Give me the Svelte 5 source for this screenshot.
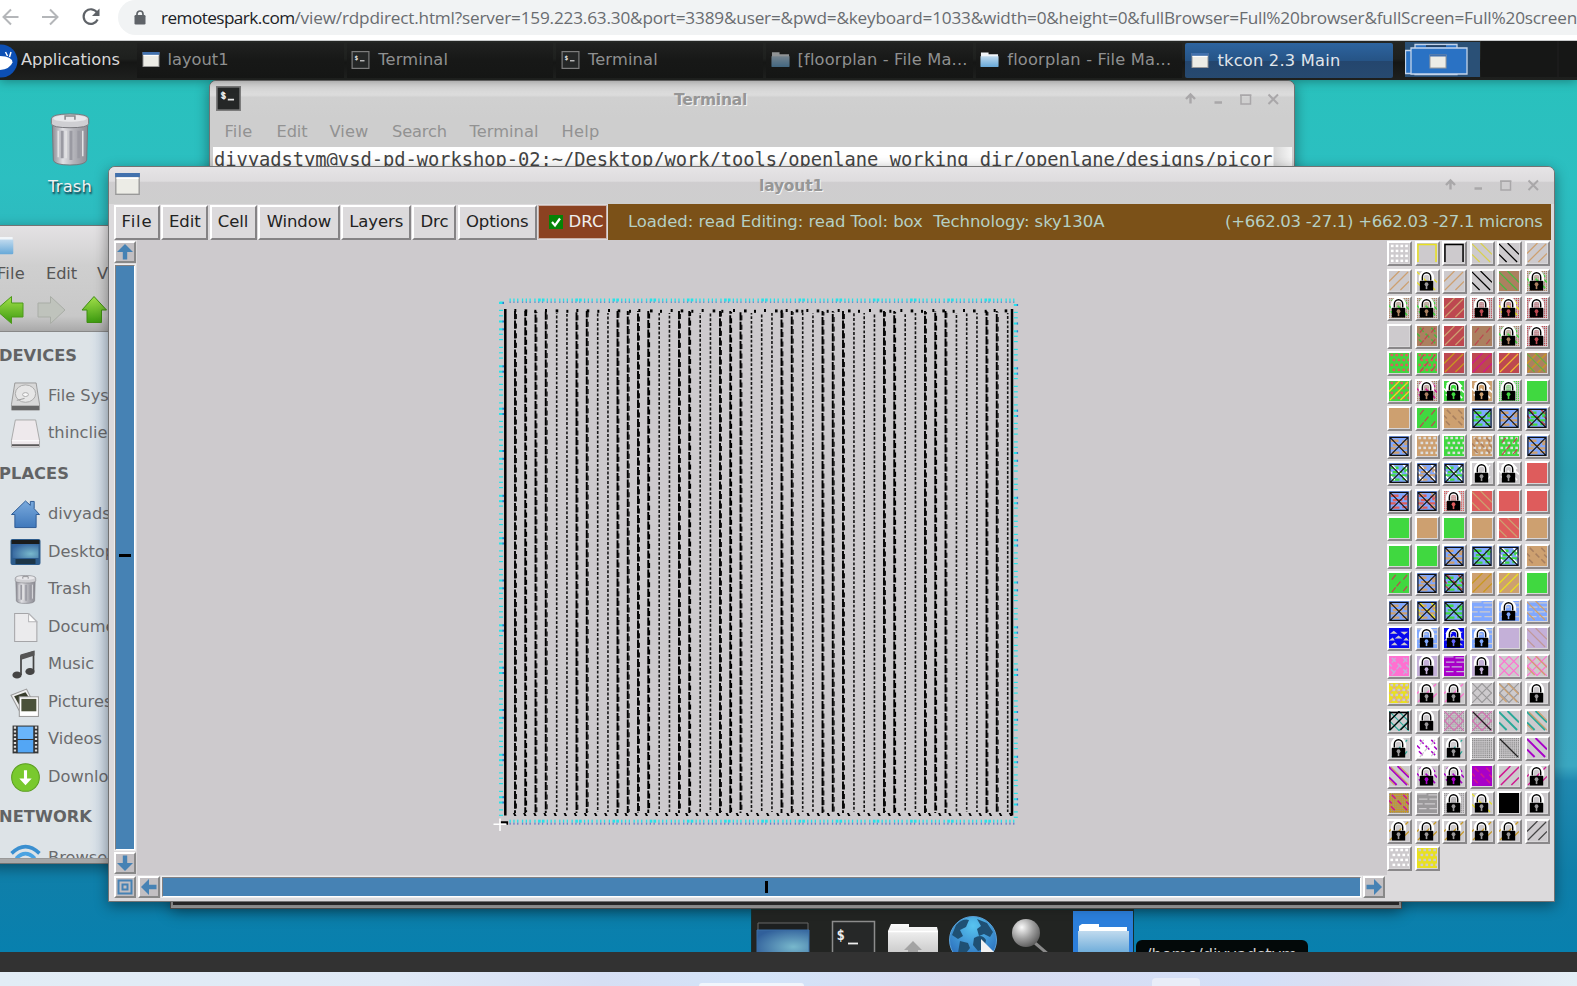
<script>
  // Spreads the letters of a label so that it fills the given width.
  function fit(node, width) {
    const w = node.getBoundingClientRect().width;
    const n = node.textContent.length;
    node.style.letterSpacing = (width - w) / n + 'px';
  }

  const tasks = [
    { icon: 'win', label: 'layout1', w: 61 },
    { icon: 'term', label: 'Terminal', w: 70 },
    { icon: 'term', label: 'Terminal', w: 70 },
    { icon: 'dim', label: '[floorplan - File Ma...', w: 170 },
    { icon: 'folder', label: 'floorplan - File Ma...', w: 164 },
    { icon: 'win', label: 'tkcon 2.3 Main', w: 123, active: true }
  ];

  const termMenu = [['File', 28, 52], ['Edit', 31, 53], ['View', 39, 62.5], ['Search', 55, 77.5], ['Terminal', 69, 92], ['Help', 38, 60]];

  const tkMenu = [['File', 31, 46], ['Edit', 31.5, 47], ['Cell', 30.5, 47], ['Window', 64.5, 82], ['Layers', 54, 70], ['Drc', 28, 44], ['Options', 62.5, 79]];

  const places = [
    { head: 'DEVICES', w: 78, h: 43 },
    { icon: 'disk', label: 'File System' },
    { icon: 'drive', label: 'thinclient' },
    { head: 'PLACES', w: 70, h: 43.5 },
    { icon: 'home', label: 'divyadstym' },
    { icon: 'desk', label: 'Desktop' },
    { icon: 'trash', label: 'Trash' },
    { icon: 'doc', label: 'Documents' },
    { icon: 'music', label: 'Music' },
    { icon: 'pics', label: 'Pictures' },
    { icon: 'video', label: 'Videos' },
    { icon: 'down', label: 'Downloads' },
    { head: 'NETWORK', w: 93, h: 43.5 },
    { icon: 'net', label: 'Browse Network' }
  ];

  // Standard cell columns: T is a strap with a heavy outline, t a light one.
  const kinds = 'TTTTttTTttTTTTttTTttTTTtttTTttTTTtttTTttTTTtttTTt';
  const cols = [...kinds].map((k, i) => ({ k, x: 515.3 + i * 10.25 }));
  const topDots = [106, 137, 166, 198, 230, 262, 292, 323, 355, 387, 416, 450, 478, 513, 543, 575, 605, 637, 668, 701, 727, 762, 795, 825, 855, 888, 905, 920, 950, 967, 982, 1013, 1043, 1076, 1107, 1137, 1170, 1202, 1231, 1264, 1295, 1326, 1360, 1390, 1421, 1452, 1482, 1517, 1544, 1577].map((v) => 480 + v / 3);
  const botDots = topDots.map((x, i) => 514 + i * 10.12);

  const pinsH = [];
  for (let i = 0, x = 509.5; x < 1016; i++, x += i % 3 ? 3.8 : 4.8) pinsH.push({ x, b: i % 9 > 6 });
  const pinsV = [];
  for (let i = 0, y = 302; y < 815; i++, y += [5.3, 7.8, 5.4][i % 3]) pinsV.push({ y, b: i % 7 === 3 || i % 7 === 4 || i === 0 });

  const G = '#40d840', T = '#cda070', R = '#bd4850', C = '#de5c5c', B = '#ac8060', P = '#c4b0d8', K = '#000';
  const U = '#80a8ff', Y = '#e8e020', M = '#a800c8', N = '#ff70d0', W = '#fff', S = '#9a989a', O = '#c89820', E = '#28a898', A = '#d01890';
  // Each entry: background, then pattern/colour pairs.
  const tiles = [
    ['', 'g', W], ['', 'b', Y], ['', 'b', K], ['', 'd', '#d8d050'], ['', 'd', K], ['', 's', T],
    ['', 's', T], ['', 'd', Y, 'L', S], ['', 's', T], ['', 'd', K], [B, 'd', '#48b840'], ['', 'q', B, 'c', G, 'L', B],
    ['', 'q', B, 'c', G, 'L', B], ['', 'q', B, 'c', G, 'L', B], [R, 's', T], ['', 'q', R, 'L', R], ['', 'q', R, 'c', Y, 'L', R], ['', 'q', R, 'L', R],
    [''], [B, 'c', '#48b840', 'j', R], [R, 's', T], [B, 'j', R], ['', 'q', B, 'c', G, 'L', B], ['', 'q', R, 'L', R],
    [G, 'o', C], [G, 'o', C, 'j', R], [R, 's', O], [R, 's', A], [R, 's', '#f0b830'], [B, 's', O, 'd', '#68b040'],
    [G, 'o', C, 's', Y], ['', 'q', B, 'c', A, 'L', B], [G, 'c', W, 'L', G], [T, 'c', W, 'L', T], ['', 'q', G, 'L', G], [G],
    [T], [G, 'j', R], [T, 'c', '#a88060'], [U, 'w', G, 'X', K], [U, 'w', T, 'X', K], [U, 'w', G, 'c', R, 'X', K],
    [U, 'w', T, 'X', K], [T, 'o', '#ddd'], [G, 'o', '#ddd'], [T, 'o', '#ddd', 'c', B], [G, 'o', '#ddd', 'j', R], [U, 'w', T, 'X', K],
    [U, 'w', G, 'c', W, 'X', K], [U, 'w', T, 'c', W, 'X', K], [U, 'w', G, 'c', W, 'X', K], ['', 'j', W, 'L', S], ['', 'c', W, 'L', S], [C],
    [U, 'w', C, 'X', K], [U, 'w', C, 'c', T, 'X', K], ['', 'q', C, 'L', C], [C, 'd', T], [C], [C],
    [G], [T], [G], [T], [C, 'd', T], [T],
    [G], [G], [U, 'w', T, 'X', K], [U, 'w', G, 'X', K], [U, 'w', G, 'c', W, 'X', K], [T, 'c', '#a88060'],
    [G, 'j', R], [U, 'w', T, 'X', K], [U, 'w', G, 'c', R, 'X', K], [T, 's', O], [T, 's', Y], [G],
    [U, 'w', T, 'X', K], [U, 'w', T, 'c', Y, 'X', K], [U, 'w', G, 'X', K], [U, 'h', '#cdcacd'], [U, 'h', '#cdcacd', 'L', U], [U, 'h', '#cdcacd', 'd', T],
    ['#0808f0', 'v', '#cdcacd'], [U, 'h', '#cdcacd', 'L', U], ['#0808f0', 'v', '#cdcacd', 'L', '#66f'], [U, 'h', '#cdcacd', 'L', U], [P], [P, 'd', '#c09898'],
    [N, 'c', P, 'j', P], [P, 'L', P], [M, 'h', P], [P, 'L', P], ['', 'x', N], ['', 'x', N, 'd', T],
    [Y, 'x', '#e0a890', 'o', '#cdcacd'], ['', 's', N, 'L', S], ['', 's', N, 'L', S], ['', 'x', S], ['', 'x', S, 'd', T], ['', 'L', S],
    ['', 'x', E, 's', K, 'b', K], ['', 'L', S], ['', 'q', S, 'x', '#d070b0'], ['', 'q', S, 'x', '#d070b0', 'i', '#222'], ['', 'D', E], ['', 'D', E, 'e', T],
    ['', 'j', E, 'L', S], [W, 'c', M, 'j', '#cdcacd'], ['', 'j', E, 'L', S], ['', 'q', '#888'], ['', 'q', '#888', 'i', '#222'], ['', 'D', M],
    ['', 'D', M, 'e', T], ['', 'c', M, 'L', M], ['', 'c', M, 'L', M], [M, 'c', A], ['', 'D2', A], ['', 's', A, 'L', S],
    [O, 'q', S, 'c', A], [S, 'h', '#cdcacd'], ['', 'q', S, 'L', S], ['', 'd', Y, 'L', S], [K], ['', 'L', S],
    ['', 's', O, 'L', S], ['', 's', O, 'L', S], ['', 's', O, 'L', S], ['', 's', O, 'L', S], ['', 's', O, 'L', S], ['', 's', '#444'],
    ['', 'o', W], [Y, 'o', '#cdcacd']
  ];
  const paths = {
    d: 'M0 1L19 20M9 0L21 12M0 12L8 20',
    e: 'M2 1L21 20M11 0L21 10M0 14L6 20',
    D: 'M0 1L19 20M9 0L21 12M0 12L8 20',
    D2: 'M21 1L2 20M12 0L0 12M21 12L13 20',
    s: 'M20 1L1 20M11 0L0 11M21 11L12 20',
    x: 'M0 0L21 21M0 10L11 21M10 0L21 11M21 0L0 21M11 0L0 11M21 10L10 21',
    c: 'M3 2l4 4M15 2l4 4M9 8l4 4M2 14l4 4M15 14l4 4M0 8l3 3M18 9l3 3',
    j: 'M7 2l-4 5M19 2l-4 5M12 9l-4 5M7 15l-4 5M19 14l-4 5',
    w: 'M2 5h8m4 1h6M4 9.500h10m2-1h3M1 13h6m4 0h8M3 17.500h8m3-.5h5',
    h: 'M0 1h10m2 1h9M2 6.500h9m2 0h8M0 11.500h6m2 0h11M2 16.500h8m3 0h8',
    b: 'M1 20V1.500H20V20',
    i: 'M1 1L20 20'
  };
  const sw = { D: 2, D2: 1.6, w: 2.4, x: 1.2, c: 1.6, i: 1.3, b: 1.6 };
  const dots = [];
  for (let r = 0; r < 4; r++) for (let c = 0; c < 4; c++) dots.push([1.5 + c * 5.2 + (r % 2) * 2.2, 0.8 + r * 5.2, 2 + c * 5]);
  const layersOf = (t) => {
    const out = [];
    for (let i = 1; i < t.length; i += 2) out.push({ p: t[i], c: t[i + 1] });
    return out;
  };
</script>

{#snippet pic(name, w, h)}
  {#if name === 'win'}
    <svg width={w} height={h} viewBox="0 0 18 16"><rect x=".5" y=".5" width="17" height="15" fill="#ecece6" stroke="#999" /><rect width="18" height="3" fill="#4271ad" /><path d="M1 3.800h16" stroke="#fff" /></svg>
  {:else if name === 'term'}
    <svg width={w} height={h} viewBox="0 0 18 18"><rect x=".6" y=".6" width="16.8" height="16.8" fill="#252727" stroke="#7c7c7c" stroke-width="1.200" /><text x="3" y="8.500" font-family="DejaVu Sans Mono" font-weight="bold" font-size="6.200" fill="#e4e4e4">$</text><path d="M8.500 9.800h4.500" stroke="#e4e4e4" stroke-width="1.100" /></svg>
  {:else if name === 'folder' || name === 'dim'}
    <svg width={w} height={h} viewBox="0 0 20 17" opacity={name === 'dim' ? 0.55 : 1}><path d="M1 1h8v2h10v13H1z" fill="#f2f6fa" /><path d="M.5 5h19v10.5a1 1 0 0 1-1 1h-17a1 1 0 0 1-1-1z" fill="url(#gFolder)" /></svg>
  {:else if name === 'trash'}
    <svg width={w} height={h} viewBox="0 0 40 54"><path d="M2 12h36l-1 36q-1 5-17 5T3 48z" fill="url(#gCan)" stroke="#77777c" /><path d="M12 18v28M21 18v30M29 18v28" stroke="#9a9aa2" stroke-width="3" /><path d="M8 18v27M16 18v28M33 18v26" stroke="#e4e4e6" stroke-width="1.500" /><path d="M1 6q0-5 19-5t19 5v5q-1 4-19 4T1 11z" fill="#cfcfd3" stroke="#77777c" /><ellipse cx="20" cy="5.500" rx="17" ry="3.500" fill="#e8e8eb" /><path d="M15 7V3h10v4" fill="none" stroke="#88888c" stroke-width="1.600" /></svg>
  {:else if name === 'disk'}
    <svg width={w} height={h} viewBox="0 0 30 30"><path d="M4 1h22l3.500 22v6H.5v-6z" fill="#d8d8d8" stroke="#999" /><path d="M1 24.500h28v4.500H1z" fill="#666" /><ellipse cx="15" cy="12" rx="10.500" ry="9" fill="#e6e6e6" stroke="#aaa" /><ellipse cx="15" cy="13" rx="3" ry="2" fill="#f8f8f8" stroke="#aaa" /><path d="M6 19l8-2" stroke="#999" /></svg>
  {:else if name === 'drive'}
    <svg width={w} height={h} viewBox="0 0 30 30"><path d="M4.500 1h21l4 21v7H.5v-7z" fill="#eee9ec" stroke="#a8a8a8" /><path d="M1 22.500h28" stroke="#fff" /><path d="M1 27h28" stroke="#444" stroke-width="1.600" /></svg>
  {:else if name === 'home'}
    <svg width={w} height={h} viewBox="0 0 30 30"><path d="M15 1l5 4.500V1.500h4V9l5.500 6H26v13.500H4V15H.5z" fill="url(#gHome)" stroke="#2d5a94" /></svg>
  {:else if name === 'desk'}
    <svg width={w} height={h} viewBox="0 0 30 26"><rect width="30" height="26" rx="2" fill="#2d5c8c" /><rect x="1" y="1" width="28" height="4" fill="#1a1c1c" /><rect x="2" y="5" width="26" height="14" fill="url(#gDesk)" /><rect x="5" y="20" width="20" height="5" fill="#1d3648" /></svg>
  {:else if name === 'doc'}
    <svg width={w} height={h} viewBox="0 0 30 28"><path d="M4.500.5H18l8 8v19H4.500z" fill="#ebebed" stroke="#a5a5a8" /><path d="M18 .5v8h8z" fill="#fff" stroke="#b5b5b8" /></svg>
  {:else if name === 'music'}
    <svg width={w} height={h} viewBox="0 0 30 29"><path d="M10.500 25V6L23 2v19" fill="none" stroke="#444" stroke-width="1.700" /><path d="M10 4.500L24 .5v5L10 10z" fill="#555" /><ellipse cx="6.500" cy="25" rx="4.600" ry="3.600" fill="#444" /><ellipse cx="19.500" cy="21.500" rx="4.600" ry="3.600" fill="#444" /></svg>
  {:else if name === 'pics'}
    <svg width={w} height={h} viewBox="0 0 30 28"><path d="M1 7L16 1l8 16-14 7z" fill="#eee" stroke="#999" /><path d="M4 8l11-4 6 9-10 7z" fill="#383d2c" /><rect x="9" y="8.500" width="18.500" height="19" fill="#fff" stroke="#999" /><rect x="11" y="10.500" width="14.500" height="12" fill="#4a513a" /></svg>
  {:else if name === 'video'}
    <svg width={w} height={h} viewBox="0 0 30 27"><rect x="2.500" width="25" height="27" fill="#333" /><path d="M4.800 1v26M25.200 1v26" stroke="#ddd" stroke-width="2.200" stroke-dasharray="2 1.700" /><rect x="7.500" y="1" width="15" height="12" fill="#69b5fb" /><rect x="7.500" y="14" width="15" height="12" fill="#53a6f5" /></svg>
  {:else if name === 'down'}
    <svg width={w} height={h} viewBox="0 0 30 28"><circle cx="15" cy="14" r="13.400" fill="#79c92e" stroke="#5a9e1e" /><path d="M13.500 7h3v8h4.500l-6 6.500L9 15h4.500z" fill="#fff" /></svg>
  {:else if name === 'net'}
    <svg width={w} height={h} viewBox="0 0 30 28"><path d="M1.500 9Q15-4 28.500 9" fill="none" stroke="#3a8fd0" stroke-width="3.500" /><path d="M6 14Q15 4.500 24 14" fill="none" stroke="#4ba3e2" stroke-width="3.500" /><path d="M11 19q4-4.500 8 0" fill="none" stroke="#3a8fd0" stroke-width="3" /></svg>
  {/if}
{/snippet}

{#snippet controls()}
  <svg class="controls" width="98" height="16" viewBox="0 0 98 16" fill="none" stroke="#a9a7a9" stroke-width="2">
    <path d="M7.500 12.500V4M3 8l4.500-4.500L12 8" stroke-width="2.400" />
    <path d="M31.500 11.500h7.500" stroke-width="2.400" />
    <path d="M58 4h9.500v9H58zM57 4.200h11.500" stroke-width="1.500" />
    <path d="M85.500 3.500l9.500 9.500M95 3.500L85.500 13" />
  </svg>
{/snippet}

{#snippet tkArrow(rot)}
  <span class="tkb"><svg width="18" height="18" viewBox="0 0 18 18"><path d="M9 1l8 8h-5.800v7.500H6.800V9H1z" fill="#4682b4" transform="rotate({rot} 9 9)" /></svg></span>
{/snippet}

<svg class="defs" width="0" height="0">
  <linearGradient id="gFolder" x2="0" y2="1"><stop stop-color="#c0daee" /><stop offset="1" stop-color="#66a8d8" /></linearGradient>
  <linearGradient id="gCan"><stop stop-color="#8d8d95" /><stop offset=".3" stop-color="#e0e0e4" /><stop offset=".6" stop-color="#b4b4ba" /><stop offset="1" stop-color="#8d8d95" /></linearGradient>
  <linearGradient id="gHome" x2="0" y2="1"><stop stop-color="#7aaadd" /><stop offset="1" stop-color="#3f78bb" /></linearGradient>
  <radialGradient id="gDesk" cx=".7" cy=".7" r=".8"><stop stop-color="#78b8cc" /><stop offset="1" stop-color="#31609b" /></radialGradient>
  <linearGradient id="gGreen" x2="0" y2="1"><stop stop-color="#a2e04a" /><stop offset="1" stop-color="#3c9a10" /></linearGradient>
  <linearGradient id="gWhite" x2="0" y2="1"><stop stop-color="#fafafa" /><stop offset="1" stop-color="#c8c8c8" /></linearGradient>
  <radialGradient id="gGlobe" cx=".5" cy=".2" r=".8"><stop stop-color="#58c4f0" /><stop offset="1" stop-color="#2767b8" /></radialGradient>
  <radialGradient id="gLens" cx=".35" cy=".3" r=".8"><stop stop-color="#fafafa" /><stop offset=".5" stop-color="#a0a0a0" /><stop offset="1" stop-color="#505050" /></radialGradient>
</svg>

<div class="screen">
  <header class="chrome">
    <svg width="118" height="35" viewBox="0 0 118 35" fill="none" stroke-width="2">
      <path d="M18.500 17H4M11 9.500L3.500 17l7.500 7.500" stroke="#b4b6b9" />
      <path d="M42 17h15M50 9.500l7.500 7.500-7.500 7.500" stroke="#b4b6b9" />
      <path d="M97 12.500a7.300 7.300 0 1 0 .6 7" stroke="#5f6368" stroke-width="2.200" />
      <path d="M99.500 8.500v7.500h-7.500z" fill="#5f6368" />
    </svg>
    <div class="url">
      <svg width="12" height="15" viewBox="0 0 12 15"><rect x=".5" y="5" width="11" height="9.500" rx="1.200" fill="#5f6368" /><path d="M3 6V4a3 3 0 0 1 6 0v2" fill="none" stroke="#5f6368" stroke-width="1.700" /></svg>
      <span class="host" use:fit={133.5}>remotespark.com</span><span class="path" use:fit={1282.5}>/view/rdpdirect.html?server=159.223.63.30&port=3389&user=&pwd=&keyboard=1033&width=0&height=0&fullBrowser=Full%20browser&fullScreen=Full%20screen</span>
    </div>
  </header>

  <main class="remote">
    <div class="deskicon">
      {@render pic('trash', 40, 53)}
      <span use:fit={44}>Trash</span>
    </div>

    <nav class="panel">
      <svg class="mouse" width="20" height="36" viewBox="0 0 20 36"><circle cx="1" cy="18" r="16.500" fill="#0c4fb4" /><path d="M0 13q12 0 12.500 6.500Q10 26 0 27z" fill="#fff" /><path d="M5.500 9l2 4M11 9l-1.500 5" stroke="#fff" stroke-width="1.500" /></svg>
      <div class="apps"><span use:fit={99}>Applications</span></div>
      {#each tasks as t}
        <div class="task" class:active={t.active}>
          {@render pic(t.icon, t.icon === 'win' ? 18 : 19, t.icon === 'win' ? 15 : t.icon === 'term' ? 18 : 17)}
          <span use:fit={t.w}>{t.label}</span>
        </div>
      {/each}
      <svg class="pager" width="172" height="39" viewBox="1405 41 172 39"><path d="M1405 42h75v35h-75z" fill="#2a5076" /><path d="M1481 41h96v36h-96z" fill="#161716" /><path d="M1558 41v36" stroke="#202120" /><g fill="#2a72c4" stroke="#c4d4ea" stroke-width="1.300"><path d="M1415 44.500h42v30h-42zM1405.500 50.500h10v23h-10z" /><path d="M1411 48h56v26h-56z" /></g><path d="M1426 46h20" stroke="#111" /><rect x="1430" y="55" width="16" height="13" fill="#ecece6" stroke="#999" /><path d="M1430 55.500h16" stroke="#4271ad" stroke-width="2" /></svg>
    </nav>

    <section class="win terminal">
      <div class="title">
        <span class="wicon">{@render pic('term', 25, 25)}</span>
        <b use:fit={73}>Terminal</b>
        {@render controls()}
      </div>
      <div class="menu">
        {#each termMenu as [label, w, cell]}
          <span class="cell" style="width:{cell}px"><span use:fit={w}>{label}</span></span>
        {/each}
      </div>
      <div class="shell"><span use:fit={1058.500}>divyadstym@vsd-pd-workshop-02:~/Desktop/work/tools/openlane_working_dir/openlane/designs/picor</span></div>
    </section>

    <section class="win files">
      <div class="ftitle">{@render pic('folder', 30, 22)}</div>
      <div class="fmenu"><div class="f1"><span use:fit={28}>File</span></div><div class="f2"><span use:fit={31}>Edit</span></div><span>View</span></div>
      <div class="ftools">
        <svg width="110" height="30" viewBox="0 0 110 30"><path d="M-4 15L11.500 1.500V8H23v14H11.500v6.500z" fill="url(#gGreen)" stroke="#4c9a1a" /><path d="M65 15L50.500 1.500V8H38v14h12.500v6.500z" fill="#bfc3bc" stroke="#a9ada6" /><path d="M94 1.500L106.500 15h-5v12.500H87V15h-5z" fill="url(#gGreen)" stroke="#3f8d12" /></svg>
      </div>
      <div class="side">
        {#each places as p}
          {#if p.head}
            <div class="head" style="height:{p.h}px"><b use:fit={p.w}>{p.head}</b></div>
          {:else}
            <div class="row"><span class="ric">{@render pic(p.icon, 31, p.icon === 'desk' ? 26 : 29)}</span><span class="rl">{p.label}</span></div>
          {/if}
        {/each}
      </div>
    </section>

    <div class="behind"></div>

    <div class="dock">
      <svg width="381" height="42" viewBox="752 910 381 42">
        <path d="M758 923h50v10h-50z" fill="#1d1f1f" stroke="#666" /><path d="M757 930h52v24h-52z" fill="url(#gDesk)" stroke="#3b6fa8" />
        <rect x="832.500" y="921.500" width="42" height="42" fill="#262828" stroke="#8c8c8c" stroke-width="1.500" />
        <text x="836.500" y="940" font-family="DejaVu Sans Mono" font-weight="bold" font-size="14" fill="#eee">$</text><path d="M848 943.500h10" stroke="#eee" stroke-width="1.800" />
        <path d="M888 931l3-7h18v3h28l1 4v24h-50z" fill="url(#gWhite)" /><path d="M888 931.500h50" stroke="#fff" stroke-width="1.500" /><path d="M904 950l9-9 9 9h-4v5h-10v-5z" fill="#a3a3a3" />
        <circle cx="973" cy="940" r="23.500" fill="url(#gGlobe)" stroke="#5aa0d8" /><path d="M956 925q7-7 13-5l-3 7-6 3 3 6-5 3-6-4zM977 919l10 4 6 9-3 5-6-3-5 2-2-7 4-3zM960 941l8 2 2 5-4 5h-8zM974 938q8-5 12 2l-2 9-6 2-5-6z" fill="#1f5074" /><path d="M981 939v15h15z" fill="#f2f2f2" />
        <path d="M1035 943l14 12" stroke="#8a8a8a" stroke-width="3" /><circle cx="1026" cy="933" r="14" fill="url(#gLens)" />
        <path d="M1073 911h60v42h-60z" fill="#2b7edb" /><path d="M1079 931v-5l3-2h17v3h28v5z" fill="#fff" /><path d="M1078 931h51v24h-51z" fill="url(#gFolder)" />
      </svg>
    </div>
    <div class="tip"><span use:fit={151}>/home/divyadstym</span></div>

    <section class="win layout">
      <div class="title">
        <span class="wicon big">{@render pic('win', 25, 22)}</span>
        <b use:fit={64}>layout1</b>
        {@render controls()}
      </div>
      <div class="tkmenu">
        {#each tkMenu as [label, w, bw]}
          <button style="width:{bw}px"><span use:fit={w}>{label}</span></button>
        {/each}
        <div class="drc">
          <svg width="14" height="14" viewBox="0 0 14 14"><rect width="14" height="14" fill="#068406" /><path d="M3 7l3 3.500L11 3.500" fill="none" stroke="#fff" stroke-width="2.200" /></svg>
          <span use:fit={35}>DRC</span>
        </div>
        <div class="status">
          <p use:fit={476.500}>Loaded: read Editing: read Tool: box  Technology: sky130A</p>
          <p use:fit={317.500}>(+662.03 -27.1) +662.03 -27.1 microns</p>
        </div>
      </div>
      <div class="body">
        <div class="vscroll">
          {@render tkArrow(0)}
          <div class="trough v"><i></i></div>
          {@render tkArrow(180)}
        </div>
        <svg class="canvas" width="1250" height="635" viewBox="137 240 1250 635">
          <rect x="137" y="240" width="1250" height="635" fill="#cdcacd" />
          <path d="M505.300 309V815.500M1012 309V815.500" stroke="#000" stroke-width="2.500" />
          {#each cols as c, i}
            {#if c.k === 'T'}
              <path d="M{c.x - 0.3} 311V813" stroke="#000" stroke-width="1.900" stroke-dasharray="8.200 1.400" stroke-dashoffset={i * 3} />
              <path d="M{c.x + 1} 312V812" stroke="#000" stroke-width="1.100" stroke-dasharray="5 4.600" stroke-dashoffset={i * 3 - 2} />
            {:else}
              <path d="M{c.x + 0.4} 313V812" stroke="#151515" stroke-width="1.600" stroke-dasharray="2.900 1.800" stroke-dashoffset={i * 1.7} />
            {/if}
          {/each}
          {#each topDots as x, i}<rect x={x - 1} y={309 + (i % 3) * 0.4} width={i % 3 === 1 ? 2.600 : 2} height="3" />{/each}
          {#each botDots as x, i}<path d="M{x - 1} 813h2l1.500 3h-2.200z" />{/each}
          {#each pinsH as p}
            <rect x={p.x} y="298.500" width={p.b ? 2.600 : 1.300} height="3" fill="#25e4ea" /><rect x={p.x} y="301.500" width="1.300" height="1.300" fill="#4a88cc" />
            <rect x={p.x} y="819.700" width={p.b ? 2.600 : 1.300} height="3" fill="#25e4ea" /><rect x={p.x} y="822.700" width="1.300" height="2" fill="#6c7ac8" />
          {/each}
          <path d="M499.500 302.500h4.500" stroke="#25e4ea" stroke-width="2" />
          {#each pinsV as p}
            <rect x="499" y={p.y} width="4" height={p.b ? 2 : 1.200} fill="#25e4ea" /><rect x="1013.800" y={p.y + 2} width="4" height={p.b ? 2 : 1.200} fill="#25e4ea" />
            {#if p.b}<rect x="502.500" y={p.y} width="1.500" height="2" fill="#3a78cc" /><rect x="1016.800" y={p.y + 2} width="1.300" height="2" fill="#3a78cc" />{/if}
          {/each}
          <path d="M500.500 822.300h6.500v2.500" fill="none" stroke="#000" stroke-width="2.200" />
          <path d="M493.500 824.200h13M500 818.500v12.500" stroke="#fff" stroke-width="1.500" />
        </svg>
        <div class="palette">
          {#each tiles as t}
            <span class="tile" style="--c:{t[0] || '#cdcacd'}">
              <svg width="21" height="21" viewBox="0 0 21 21" fill="none">
                {#each layersOf(t) as l}
                  {#if l.p === 'L'}
                    <path d="M4.500 11V7a5.500 5.600 0 0 1 11 0V11" fill="none" stroke="#fff" stroke-width="5" />
                    <path d="M5.600 10V6.500a4.400 4.600 0 0 1 8.800 0V10" stroke="#000" stroke-width="1.500" />
                    <rect x="3" y="10.300" width="14" height="10.200" fill="#000" />
                    <circle cx="10" cy="13.800" r="2" fill={l.c} /><path d="M10 14v5" stroke={l.c} stroke-width="1.700" />
                  {:else if l.p === 'X'}
                    <path d="M1 21V1.500H20V21M1.500 2L19.500 20M19.500 2L1.500 20M1 20.300H20" stroke="#111" stroke-width="1.200" />
                  {:else if l.p === 'g' || l.p === 'o'}
                    {#each dots as [x, y, gx]}<rect x={l.p === 'g' ? gx : x} y={l.p === 'g' ? y + 1 : y} width="2.800" height="2.600" fill={l.c} />{/each}
                  {:else if l.p === 'q'}
                    <path d="M0 .5h21M0 2.500h21M0 4.500h21M0 6.500h21M0 8.500h21M0 10.500h21M0 12.500h21M0 14.500h21M0 16.500h21M0 18.500h21M0 20.500h21" stroke={l.c} stroke-dasharray="1.300 .9" stroke-width="1.200" />
                  {:else if l.p === 'v'}
                    <path d="M1 6l4-3 4 3zM12 4h8l-4 3zM6 11l4-3 4 3zM0 13l4-3 2 3zM15 13l3-3 3 3zM2 18l4-3 3 3zM12 18l4-3 4 3z" fill={l.c} />
                  {:else}
                    <path d={paths[l.p]} stroke={l.c} stroke-width={sw[l.p] || 1.300} />
                  {/if}
                {/each}
              </svg>
            </span>
          {/each}
        </div>
      </div>
      <div class="foot">
        <span class="tkb"><svg width="18" height="18" viewBox="0 0 18 18" fill="none" stroke="#4682b4" stroke-width="2"><path d="M2.500 2.500h13v13h-13z" /><path d="M6.500 6.500h5v5h-5z" /></svg></span>
        {@render tkArrow(270)}
        <div class="trough h"><i></i></div>
        {@render tkArrow(90)}
      </div>
    </section>
  </main>

  <div class="band"></div>
  <footer class="hostbar"><i class="start"></i><i class="app"></i></footer>
</div>

<style>
  :global(body) { margin: 0; overflow: hidden; background: #fff; }
  .screen { width: 1577px; height: 986px; display: grid; grid-template-rows: 41px 911px 20px 14px; overflow: hidden; font: 16.25px/20px "DejaVu Sans", sans-serif; }
  .screen svg { display: block; flex: none; }
  .screen span, .screen b { white-space: nowrap; }
  .defs { position: absolute; }

  .chrome { display: flex; background: #fff; border-bottom: 1px solid #c9cbcc; height: 40px; overflow: hidden; }
  .url { display: flex; align-items: center; flex: none; width: 1480px; height: 35px; border-radius: 18px 0 0 18px; background: #f1f3f4; padding-left: 16px; font: 17.2px/34px "Open Sans", sans-serif; box-sizing: border-box; }
  .url svg { margin-right: 15px; }
  .host { color: #202124; }
  .path { color: #696c70; }

  .remote { position: relative; overflow: hidden; background: linear-gradient(#29c1bd 40px, #2cbfc1 140px, #2fb5bd 260px, #2ba0b2 430px, #38a6bf 600px, #3ba8c2 725px, #2089b0 740px, #107fa9 830px, #0880ae 911px); }
  .panel { position: relative; z-index: 1; display: flex; align-items: center; height: 39px; background: linear-gradient(#242624, #1e201e 45%, #151615 55%, #1e201e); box-shadow: 0 1px 10px rgba(0,0,0,.35); color: #d8d8d8; }
  .mouse { margin-right: 1px; }
  .apps { width: 116px; flex: none; padding-bottom: 2px; }
  .task { display: flex; align-items: center; box-sizing: border-box; flex: none; width: 206.500px; height: 35px; margin-right: 3.200px; padding: 0 0 2px 4.500px; color: #8f9090; background: linear-gradient(#202120, #171817 50%, #151615); }
  .task svg { margin-right: 8px; }
  .task.active { margin-right: 0; width: 208px; padding: 0 0 0 6px; color: #e0e6ec; background: linear-gradient(#2d64a0, #265486 50%, #24466e 52%, #274a70); border-radius: 2px; }
  .pager { position: absolute; left: 1405px; top: 0; }

  .deskicon { position: absolute; left: 38px; top: 72px; width: 64px; display: flex; flex-direction: column; align-items: center; gap: 11px; color: #f2f2f2; text-shadow: 1px 2px 2px #123; }

  .win { position: absolute; box-sizing: border-box; background: #cecece; border: 1px solid #737373; border-radius: 7px 7px 0 0; box-shadow: 0 4px 14px rgba(0,0,0,.4); overflow: hidden; }
  .title { position: relative; display: flex; align-items: center; justify-content: center; font-size: 15.500px; color: #969696; text-shadow: 1px 1px #f4f4f4; background: linear-gradient(#e6e4e6, #dedcde 38%, #cfcdcf 42%, #cecece); }
  .title .wicon { position: absolute; left: 6px; top: 6px; }
  .title :global(.controls) { position: absolute; right: 13.500px; top: 10px; }
  .terminal { left: 209px; top: 39px; width: 1086px; height: 140px; }
  .terminal .title { height: 37px; padding-right: 83px; background: linear-gradient(#d6d6d6, #dcdcdc 38%, #d0d0d0 44%, #cecece); }
  .terminal .wicon { top: 5px; }
  .menu { display: flex; height: 29px; padding: 3px 0 0 14.500px; box-sizing: border-box; color: #929292; line-height: 21px; }
  .cell { flex: none; }
  .shell { height: 22px; margin: 0 2px 0 3px; padding-left: 1px; background: linear-gradient(90deg, #fff 1060px, #d8d8d8 1061px, #f4f4f4 1078px); font: 18.750px/25px "DejaVu Sans Mono", monospace; color: #444; }

  .files { left: -12px; top: 184px; width: 140px; height: 639px; background: linear-gradient(#e4e2e4, #cfcfcf 40px, #c8c8c8 90px, #a9a9a9 105px); }
  .ftitle { height: 34px; padding-top: 7px; box-sizing: border-box; }
  .ftitle :global(svg) { margin-left: -3px; }
  .fmenu { display: flex; padding: 4px 0 0 8px; height: 35px; box-sizing: border-box; color: #555; }
  .f1 { width: 49px; flex: none; }
  .f2 { width: 51px; flex: none; }
  .ftools { height: 36px; padding-left: 11px; }
  .side { height: 528px; box-sizing: border-box; padding: 2px 0 0 10px; overflow: hidden; background: linear-gradient(90deg, #dde3e7 100px, #ccd9e6 118px); color: #6a6b6d; border-top: 1px solid #888; border-bottom: 1px solid #999; }
  .head { display: flex; align-items: center; color: #626365; }
  .row { display: flex; align-items: center; height: 37.500px; }
  .row:nth-child(n) { padding-top: .03px; }
  .ric { width: 31px; margin: 1px 7px 0 11px; }

  .behind { position: absolute; left: 171px; top: 760px; width: 1230px; height: 107px; box-sizing: border-box; background: #333; border: 2px solid #aaa; border-bottom: 3px solid #aaa; box-shadow: 0 0 0 1px #555, 0 4px 14px rgba(0,0,0,.4); }
  .dock { position: absolute; left: 752px; top: 869px; width: 381px; height: 42px; background: #222422; box-shadow: 0 0 0 1px #14302f; }
  .tip { position: absolute; left: 1136px; top: 899px; width: 172px; height: 30px; box-sizing: border-box; border-radius: 6px; background: #030909; color: #d0d0d0; padding: 5px 0 0 10px; }

  .layout { left: 108px; top: 125px; width: 1447px; height: 736px; background: #dcdadc; }
  .layout .title { height: 37px; padding-right: 81px; }
  .tkmenu { display: flex; align-items: stretch; height: 36px; gap: 1.300px; padding: 0 3px 0 5px; font-size: 16.500px; }
  button { flex: none; box-sizing: border-box; padding: 0 0 2px; margin: 1px 0 0; font: inherit; color: #222; background: #dcdadc; border: 2px solid; border-color: #fff #858385 #858385 #fff; text-align: center; }
  .drc { display: flex; align-items: center; gap: 5.500px; box-sizing: border-box; flex: none; width: 69px; margin-top: 1px; height: 34px; padding: 0 0 1px 10px; background: #8b4221; color: #eee; border: 1px solid #c8b0a8; }
  .status { flex: 1; display: flex; align-items: center; justify-content: space-between; padding: 0 8.500px 1px 19.500px; background: #7b5118; color: #b5d0c4; }
  .status p { margin: 0; white-space: pre; }
  .body { display: grid; grid-template-columns: 28px 1250px 167px; height: 635px; }
  .vscroll { display: flex; flex-direction: column; gap: 2px; padding: 1px 0 0 5px; }
  .tkb { display: block; box-sizing: border-box; flex: none; width: 22px; height: 22px; border: 2px solid; border-color: #fff #888 #888 #fff; background: #c2bfc2; }
  .trough { box-sizing: border-box; background: #4682b4; border: 1.500px solid; border-color: #828082 #fff #fff #828082; display: flex; align-items: center; justify-content: center; outline: 1px solid #eee; }
  .trough.v { width: 20px; height: 585px; margin-left: 1px; padding-bottom: 5px; }
  .trough i { background: #000; width: 12px; height: 3px; }
  .palette { display: grid; grid-template-columns: repeat(6, 25px); grid-auto-rows: 25px; gap: 2.500px; padding: 1px 0 0; margin-left: .2px; align-content: start; }
  .tile { box-sizing: border-box; width: 25px; height: 25px; border: 2px solid; border-color: #fff #8a888a #8a888a #fff; background: #d8d6d8; overflow: hidden; }
  .tile svg { background: var(--c); width: 20px; height: 20px; }
  .foot { display: flex; gap: 2px; padding: 1px 0 0 5px; height: 25px; }
  .trough.h { width: 1199px; height: 20px; margin: 1px 0 0 0; padding-left: 10px; }
  .trough.h i { width: 3px; height: 12px; }

  .band { background: #323232; }
  .hostbar { display: flex; align-items: flex-end; background: linear-gradient(90deg, #e2edf6, #dfe9f6 400px, #d6dff4 600px, #d3e4f9 760px, #d8dcf0 950px, #d4e0f8 1250px, #dcdff0 1380px, #e4eef6); }
  .start { width: 105px; height: 3px; margin-left: 699px; background: #f2f6fc; border-radius: 5px 5px 0 0; }
  .app { width: 48px; height: 8px; margin-left: 348px; background: #e9edf8; border-radius: 4px 4px 0 0; }
</style>
